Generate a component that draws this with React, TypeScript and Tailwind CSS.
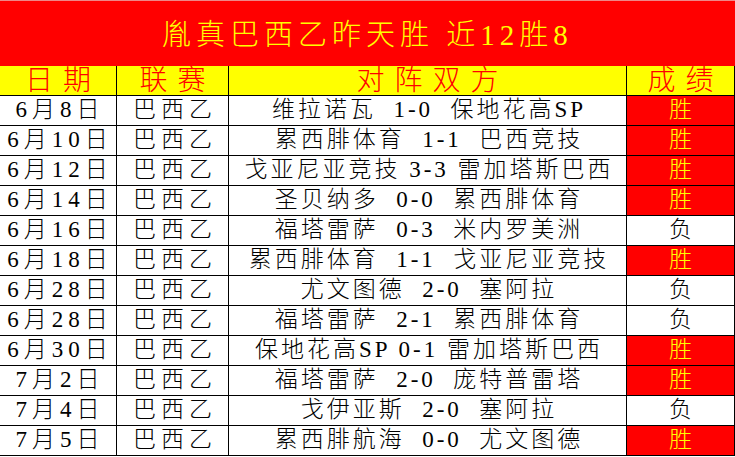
import { FC } from 'react'

const rows: [string, string, string, boolean][] = [
  ['6月8日', '巴西乙', '维拉诺瓦  1-0  保地花高SP', true],
  ['6月10日', '巴西乙', '累西腓体育  1-1  巴西竞技', true],
  ['6月12日', '巴西乙', '戈亚尼亚竞技 3-3 雷加塔斯巴西', true],
  ['6月14日', '巴西乙', '圣贝纳多  0-0  累西腓体育', true],
  ['6月16日', '巴西乙', '福塔雷萨  0-3  米内罗美洲', false],
  ['6月18日', '巴西乙', '累西腓体育  1-1  戈亚尼亚竞技', true],
  ['6月28日', '巴西乙', '尤文图德  2-0  塞阿拉', false],
  ['6月28日', '巴西乙', '福塔雷萨  2-1  累西腓体育', false],
  ['6月30日', '巴西乙', '保地花高SP 0-1 雷加塔斯巴西', true],
  ['7月2日', '巴西乙', '福塔雷萨  2-0  庞特普雷塔', true],
  ['7月4日', '巴西乙', '戈伊亚斯  2-0  塞阿拉', false],
  ['7月5日', '巴西乙', '累西腓航海  0-0  尤文图德', true],
]

const cell =
  'flex h-[30px] items-center justify-center overflow-hidden whitespace-pre border-b border-r border-black'

const App: FC = () => {
  return (
    <div className="w-[735px] h-[457px] overflow-hidden bg-white font-['Liberation_Serif','Noto_Sans_CJK_SC',serif] font-light">
      <div className="flex h-[66px] items-center justify-center border-t border-[#e88] bg-[#ff0000] pt-1 text-[29px] tracking-[5px] text-[#ffff00] whitespace-pre">
        胤真巴西乙昨天胜 近12胜8
      </div>
      <div className="grid grid-cols-[117px_112px_398px_108px]">
        {['日期', '联赛', '对阵双方', '成绩'].map((h) => (
          <div
            key={h}
            className={`${cell} bg-[#ffff00] text-[28px] leading-none tracking-[10px] pl-[10px] text-[#ff0000]`}
          >
            {h}
          </div>
        ))}
        {rows.map(([date, league, match, win], i) => (
          <div key={i} className="contents">
            <div className={`${cell} pl-[4px] text-[23px] tracking-[5px] text-black`}>{date}</div>
            <div className={`${cell} pl-[5px] text-[23px] tracking-[5px] text-black`}>{league}</div>
            <div className={`${cell} pl-[3px] text-[23px] tracking-[3px] text-black`}>{match}</div>
            <div
              className={`${cell} text-[23px] ${
                win ? 'bg-[#ff0000] text-[#ffff00]' : 'bg-white text-black'
              }`}
            >
              {win ? '胜' : '负'}
            </div>
          </div>
        ))}
      </div>
    </div>
  )
}

export default App
